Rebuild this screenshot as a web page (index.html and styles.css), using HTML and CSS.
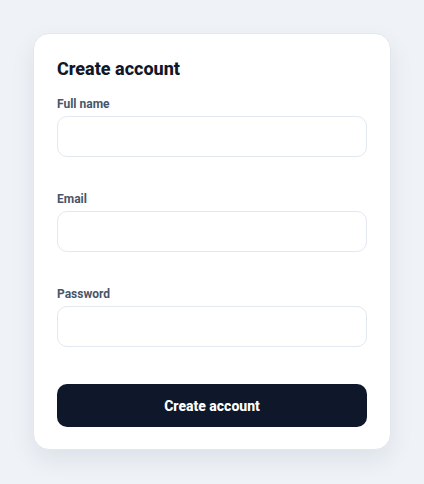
FILE: index.html
```html
<!DOCTYPE html>
<html lang="en">
<head>
<meta charset="utf-8">
<title>Create account</title>
<link rel="stylesheet" href="styles.css">
</head>
<body>
<main class="page">
  <form class="card">
    <h1 class="title">Create account</h1>
    <div class="field">
      <label class="label" for="name">Full name</label>
      <input class="input" id="name" type="text">
    </div>
    <div class="field">
      <label class="label" for="email">Email</label>
      <input class="input" id="email" type="email">
    </div>
    <div class="field">
      <label class="label" for="password">Password</label>
      <input class="input" id="password" type="password">
    </div>
    <button class="button" type="button">Create account</button>
  </form>
</main>
</body>
</html>
```

FILE: styles.css
```css
* { box-sizing: border-box; }
html, body { margin: 0; padding: 0; }
body {
  background: #eff3f8;
  font-family: Roboto, "Liberation Sans", sans-serif;
  min-height: 484px;
}
.page {
  display: flex;
  justify-content: center;
  padding-top: 33px;
}
.card {
  width: 358px;
  background: #ffffff;
  border: 1px solid #e3e8ef;
  border-radius: 16px;
  padding: 23px 23px 22px;
  box-shadow: 0 10px 24px rgba(15, 23, 42, 0.08);
  display: flex;
  flex-direction: column;
}
.title {
  margin: 0 0 15px;
  font-size: 18px;
  line-height: 24px;
  font-weight: 800;
  color: #0f172a;
}
.field {
  display: flex;
  flex-direction: column;
  gap: 4px;
  margin-bottom: 34px;
}
.label {
  font-size: 12px;
  line-height: 16px;
  font-weight: 700;
  color: #475569;
}
.input {
  height: 41px;
  border: 1px solid #e2e8f0;
  border-radius: 10px;
  background: #fff;
  font: inherit;
  padding: 0 12px;
}
.field:last-of-type { margin-bottom: 37px; }
.button {
  height: 43px;
  border: 0;
  border-radius: 10px;
  background: #0f172a;
  color: #ffffff;
  font-family: inherit;
  font-size: 14px;
  font-weight: 800;
}
```
